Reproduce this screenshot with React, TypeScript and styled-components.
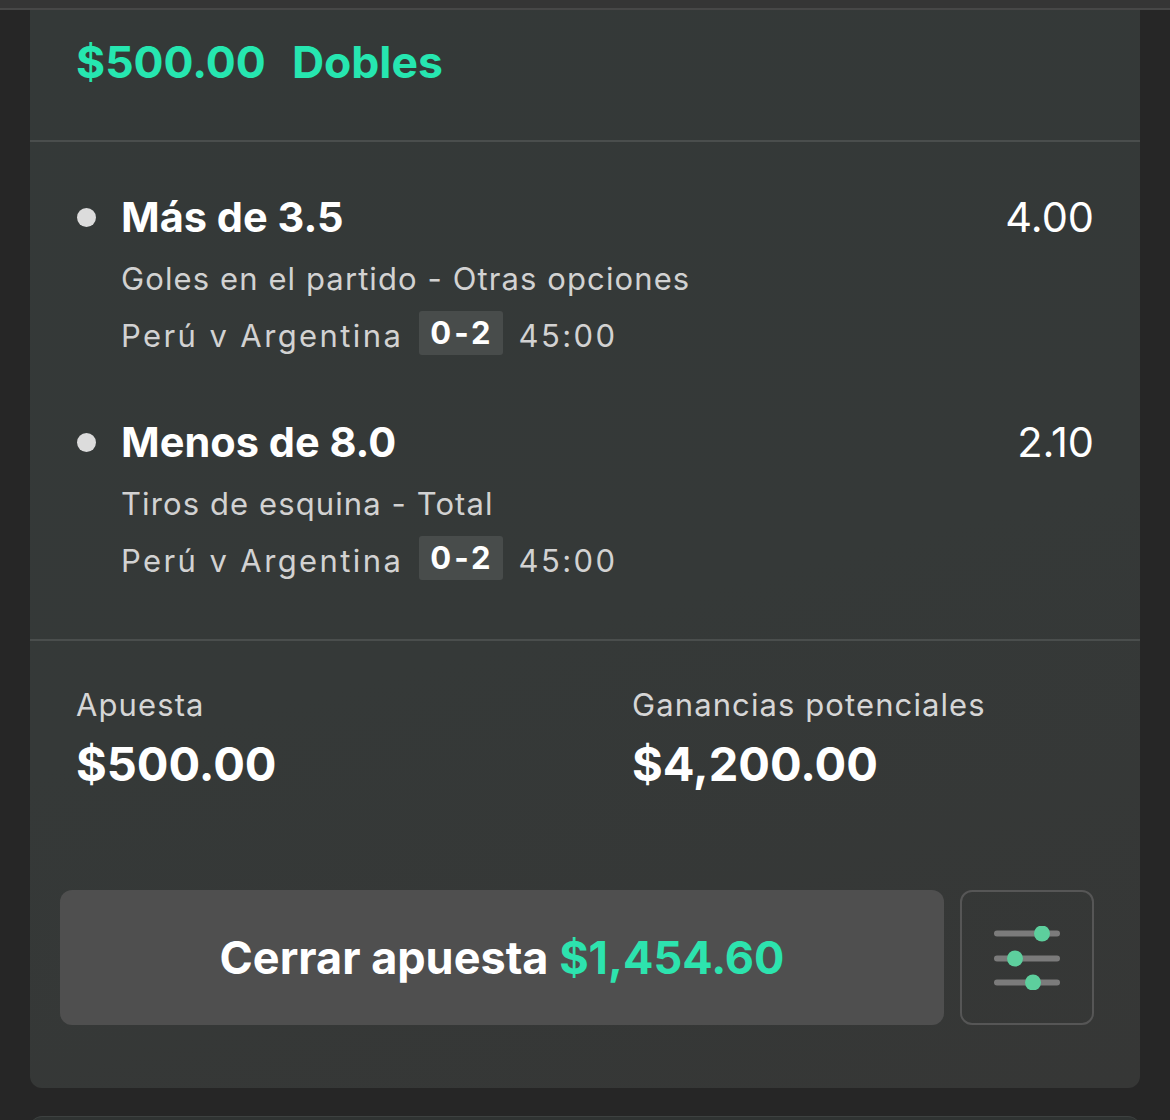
import styled, { createGlobalStyle } from 'styled-components';

type ISelection = {
  pick: string;
  odds: string;
  market: string;
  event: string;
  score: string;
  clock: string;
};

const selections: ISelection[] = [
  {
    pick: 'Más de 3.5',
    odds: '4.00',
    market: 'Goles en el partido - Otras opciones',
    event: 'Perú v Argentina',
    score: '0-2',
    clock: '45:00',
  },
  {
    pick: 'Menos de 8.0',
    odds: '2.10',
    market: 'Tiros de esquina - Total',
    event: 'Perú v Argentina',
    score: '0-2',
    clock: '45:00',
  },
];

const SlidersIcon = () => (
  <svg width="70" height="64" viewBox="0 0 70 64" fill="none">
    <g stroke="#7b7b7b" strokeWidth="6" strokeLinecap="round">
      <line x1="5" y1="7.5" x2="65" y2="7.5" />
      <line x1="5" y1="32.5" x2="65" y2="32.5" />
      <line x1="5" y1="56.5" x2="65" y2="56.5" />
    </g>
    <g fill="#5dcf9d">
      <circle cx="50" cy="7.5" r="8" />
      <circle cx="23" cy="32.5" r="8" />
      <circle cx="41" cy="56.5" r="8" />
    </g>
  </svg>
);

export default function App() {
  return (
    <>
      <GlobalStyle />
      <TopStrip />
      <Page>
        <BetCard>
          <Header>
            <HeaderTitle>
              $500.00<BetType>Dobles</BetType>
            </HeaderTitle>
          </Header>

          <Selections>
            {selections.map((s, i) => (
              <Selection key={i}>
                <PickRow>
                  <Bullet />
                  <Pick>{s.pick}</Pick>
                  <Odds>{s.odds}</Odds>
                </PickRow>
                <Details>
                  <Market>{s.market}</Market>
                  <EventRow>
                    <EventText>{s.event}</EventText>
                    <Score>{s.score}</Score>
                    <EventText>{s.clock}</EventText>
                  </EventRow>
                </Details>
              </Selection>
            ))}
          </Selections>

          <Footer>
            <Stakes>
              <StakeBlock>
                <StakeLabel>Apuesta</StakeLabel>
                <StakeValue>$500.00</StakeValue>
              </StakeBlock>
              <StakeBlock>
                <StakeLabel>Ganancias potenciales</StakeLabel>
                <StakeValue>$4,200.00</StakeValue>
              </StakeBlock>
            </Stakes>
            <Actions>
              <CashOutButton>
                Cerrar apuesta <CashOutAmount>$1,454.60</CashOutAmount>
              </CashOutButton>
              <SettingsButton>
                <SlidersIcon />
              </SettingsButton>
            </Actions>
          </Footer>
        </BetCard>
        <NextCard />
      </Page>
    </>
  );
}

const GlobalStyle = createGlobalStyle`
  html, body {
    margin: 0;
    padding: 0;
    background: #262626;
  }
  body {
    font-family: Inter, "Noto Sans", "Liberation Sans", sans-serif;
    color: #ffffff;
  }
`;

const TopStrip = styled.div`
  height: 8px;
  background: #353535;
  border-bottom: 2px solid #474747;
`;

const Page = styled.div`
  padding: 0 30px;
  height: 1110px;
  overflow: hidden;
`;

const BetCard = styled.div`
  width: 1110px;
  background: linear-gradient(165deg, #343938 0%, #353938 55%, #363736 100%);
  border-radius: 0 0 12px 12px;
`;

const Header = styled.div`
  padding: 24px 46px 50px;
  border-bottom: 2px solid #4a4e4d;
`;

const HeaderTitle = styled.div`
  font-size: 44.5px;
  line-height: 56px;
  font-weight: 700;
  color: #26e6b0;
`;

const BetType = styled.span`
  margin-left: 26px;
`;

const Selections = styled.div`
  padding: 42px 46px 50px;
  display: flex;
  flex-direction: column;
  gap: 45px;
  border-bottom: 2px solid #4a4e4d;
`;

const Selection = styled.div`
  display: flex;
  flex-direction: column;
`;

const PickRow = styled.div`
  display: flex;
  align-items: center;
  height: 66px;
`;

const Bullet = styled.span`
  width: 19px;
  height: 19px;
  border-radius: 50%;
  background: #dcdcdc;
  margin: 0 25px 0 1px;
  flex-shrink: 0;
`;

const Pick = styled.span`
  font-size: 41.5px;
  line-height: 66px;
  font-weight: 700;
  color: #ffffff;
`;

const Odds = styled.span`
  margin-left: auto;
  font-size: 41.5px;
  line-height: 66px;
  font-weight: 400;
  color: #ffffff;
`;

const Details = styled.div`
  padding-left: 45px;
  display: flex;
  flex-direction: column;
`;

const Market = styled.span`
  font-size: 31px;
  line-height: 57px;
  letter-spacing: 1.1px;
  color: #d2d2d2;
`;

const EventRow = styled.div`
  display: flex;
  align-items: center;
  gap: 16px;
  height: 57px;
`;

const EventText = styled.span`
  font-size: 31px;
  line-height: 57px;
  letter-spacing: 2.4px;
  color: #d2d2d2;
`;

const Score = styled.span`
  display: inline-block;
  height: 44px;
  line-height: 44px;
  padding: 0 9px 0 11px;
  margin-bottom: 5px;
  border-radius: 3px;
  background: #484c4b;
  font-size: 31px;
  font-weight: 700;
  letter-spacing: 3px;
  color: #ffffff;
`;

const Footer = styled.div`
  padding: 44px 46px 63px;
`;

const Stakes = styled.div`
  display: grid;
  grid-template-columns: 556px 1fr;
`;

const StakeBlock = styled.div`
  display: flex;
  flex-direction: column;
`;

const StakeLabel = styled.span`
  font-size: 31px;
  line-height: 40px;
  letter-spacing: 1.1px;
  color: #d6d6d6;
`;

const StakeValue = styled.span`
  margin-top: 12px;
  font-size: 47px;
  line-height: 54px;
  font-weight: 700;
  color: #ffffff;
`;

const Actions = styled.div`
  margin: 99px 0 0 -16px;
  display: flex;
  gap: 16px;
  height: 135px;
`;

const CashOutButton = styled.button`
  flex: 1;
  border: none;
  border-radius: 12px;
  background: #4f4f4f;
  font-family: inherit;
  font-size: 45px;
  font-weight: 700;
  color: #ffffff;
  cursor: pointer;
`;

const CashOutAmount = styled.span`
  color: #2de3ae;
`;

const SettingsButton = styled.button`
  width: 134px;
  box-sizing: border-box;
  border: 2px solid #565656;
  border-radius: 12px;
  background: transparent;
  display: flex;
  align-items: center;
  justify-content: center;
  padding: 0;
  cursor: pointer;
`;

const NextCard = styled.div`
  margin-top: 28px;
  width: 1110px;
  height: 20px;
  background: #2f3332;
  border-top: 1px solid #3d4140;
  border-radius: 12px 12px 0 0;
`;
